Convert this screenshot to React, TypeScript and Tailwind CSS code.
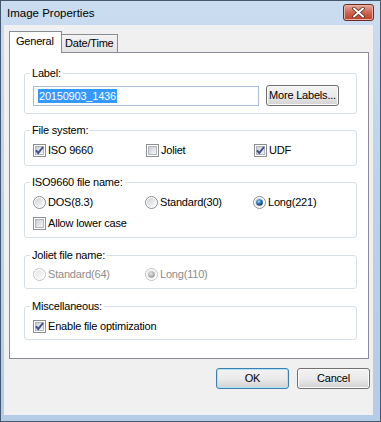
import type { ReactNode } from "react";

function CheckBox({ checked }: { checked?: boolean }) {
    return (
        <svg width="13" height="13" viewBox="0 0 13 13" className="shrink-0">
            <defs>
                <linearGradient id="cbFill" x1="0" y1="0" x2="1" y2="1">
                    <stop offset="0" stopColor="#c9ccd1" />
                    <stop offset="1" stopColor="#f7f7f7" />
                </linearGradient>
            </defs>
            <rect x="0.5" y="0.5" width="12" height="12" fill="#ffffff" stroke="#8e8f8f" />
            <rect x="2.5" y="2.5" width="8" height="8" fill="url(#cbFill)" stroke="#b2b6bc" />
            {checked && (
                <path d="M3 6.3 L5.3 9 L10 3" fill="none" stroke="#3b4f8f" strokeWidth="2" strokeLinejoin="round" />
            )}
        </svg>
    );
}

function Radio({ checked, disabled }: { checked?: boolean; disabled?: boolean }) {
    return (
        <svg width="13" height="13" viewBox="0 0 13 13" className="shrink-0">
            <defs>
                <linearGradient id="rbFill" x1="0" y1="0" x2="1" y2="1">
                    <stop offset="0" stopColor="#cfd2d6" />
                    <stop offset="1" stopColor="#fbfbfb" />
                </linearGradient>
                <linearGradient id="rbFillOff" x1="0" y1="0" x2="1" y2="1">
                    <stop offset="0" stopColor="#e4e5e7" />
                    <stop offset="1" stopColor="#fbfbfb" />
                </linearGradient>
                <radialGradient id="rbDot" cx="0.4" cy="0.35" r="0.65">
                    <stop offset="0" stopColor="#a8defc" />
                    <stop offset="0.45" stopColor="#2d86c9" />
                    <stop offset="1" stopColor="#0c355e" />
                </radialGradient>
                <radialGradient id="rbDotOff" cx="0.4" cy="0.35" r="0.65">
                    <stop offset="0" stopColor="#e6e6e6" />
                    <stop offset="1" stopColor="#9a9a9a" />
                </radialGradient>
            </defs>
            <circle cx="6.5" cy="6.5" r="6" fill="#ffffff" stroke={disabled ? "#c2c2c2" : "#8e8f8f"} />
            <circle cx="6.5" cy="6.5" r="4.5" fill={disabled ? "url(#rbFillOff)" : "url(#rbFill)"} />
            {checked && <circle cx="6.5" cy="6.5" r="3.3" fill={disabled ? "url(#rbDotOff)" : "url(#rbDot)"} />}
        </svg>
    );
}

function Group({ title, children, className }: { title: string; children: ReactNode; className?: string }) {
    return (
        <div className={`relative w-[333px] rounded-[3px] border border-[#d5dfe5] pl-[8px] ${className ?? ""}`}>
            <span className="absolute left-[5px] top-[-7px] bg-white px-[2px] leading-[13px]">{title}</span>
            {children}
        </div>
    );
}

function Option({ control, label, disabled, width }: { control: ReactNode; label: string; disabled?: boolean; width?: string }) {
    return (
        <div className={`flex h-[13px] items-center gap-[2px] ${width ?? ""}`}>
            {control}
            <span className={`leading-[13px] ${disabled ? "text-[#8d8d8d]" : "text-black"}`}>{label}</span>
        </div>
    );
}

function WinButton({ label, isDefault }: { label: string; isDefault?: boolean }) {
    return (
        <button
            className={`h-[21px] w-[73px] rounded-[3px] border bg-gradient-to-b from-[#f2f2f2] via-[#ebebeb] to-[#d2d2d2] leading-[19px] text-black ${
                isDefault ? "border-[#3c7fb1] shadow-[inset_0_0_0_1px_#aee3f8]" : "border-[#707070] shadow-[inset_0_0_0_1px_#fbfbfb]"
            }`}
        >
            {label}
        </button>
    );
}

export default function App() {
    return (
        <div className="flex h-[422px] w-[381px] flex-col border border-[#46586e] bg-gradient-to-b from-[#cadcf0] via-[#bad1ea] to-[#b4cce7] font-['Liberation_Sans',Arial,sans-serif] text-[11px] tracking-[-0.2px] text-black">
            {/* Title bar */}
            <div className="flex h-[24px] items-start justify-between pl-[6px] pr-[6px]">
                <span className="mt-[6px] text-[11.5px] leading-[13px] tracking-normal">Image Properties</span>
                <div className="mt-[3px] flex h-[17px] w-[31px] items-center justify-center rounded-[3px] border border-[#6b2a20] bg-gradient-to-b from-[#e7a99c] via-[#cf6650] to-[#b93d27] shadow-[inset_0_0_0_1px_#eab2a6]">
                    <svg width="13" height="11" viewBox="0 0 13 11">
                        <path d="M2 1.5 L11 9.5 M11 1.5 L2 9.5" stroke="#5a2a22" strokeWidth="3.6" strokeLinecap="round" />
                        <path d="M2 1.5 L11 9.5 M11 1.5 L2 9.5" stroke="#ffffff" strokeWidth="2" strokeLinecap="round" />
                    </svg>
                </div>
            </div>

            {/* Frame + client */}
            <div className="flex flex-1 pb-[6px] pl-[3px] pr-[7px]">
                <div className="flex flex-1 flex-col bg-[#f0f0f0] pl-[5px] pr-[3px] pt-[6px]">
                    {/* Tabs */}
                    <div className="flex h-[21px] items-end">
                        <div className="relative z-10 -mb-[1px] h-[22px] w-[53px] border border-b-0 border-[#898c95] bg-white pl-[6px] pt-[3px] leading-[13px]">
                            General
                        </div>
                        <div className="-ml-[1px] h-[18px] w-[57px] border border-b-0 border-[#898c95] bg-gradient-to-b from-[#f3f3f3] to-[#e3e3e3] pl-[3px] pt-[2px] leading-[13px]">
                            Date/Time
                        </div>
                    </div>

                    {/* Panel */}
                    <div className="mr-[1px] flex h-[307px] w-[360px] flex-col border border-[#898c95] bg-white pl-[14px] pt-[20px]">
                        <Group title="Label:" className="pb-[7px] pt-[11px]">
                            <div className="flex items-start gap-[7px]">
                                <div className="mt-[1px] flex h-[20px] w-[226px] items-center border border-[#a9bfd6] bg-white pl-[4px]">
                                    <span className="bg-[#3399ff] px-[1px] leading-[14px] text-white">20150903_1436</span>
                                </div>
                                <WinButton label="More Labels..." />
                            </div>
                        </Group>

                        <Group title="File system:" className="mt-[16px] pb-[8px] pt-[13px]">
                            <div className="flex">
                                <Option width="w-[113px]" control={<CheckBox checked />} label="ISO 9660" />
                                <Option width="w-[108px]" control={<CheckBox />} label="Joliet" />
                                <Option control={<CheckBox checked />} label="UDF" />
                            </div>
                        </Group>

                        <Group title="ISO9660 file name:" className="mt-[16px] pb-[7px] pt-[13px]">
                            <div className="flex">
                                <Option width="w-[112px]" control={<Radio />} label="DOS(8.3)" />
                                <Option width="w-[108px]" control={<Radio />} label="Standard(30)" />
                                <Option control={<Radio checked />} label="Long(221)" />
                            </div>
                            <div className="mt-[8px]">
                                <Option control={<CheckBox />} label="Allow lower case" />
                            </div>
                        </Group>

                        <Group title="Joliet file name:" className="mt-[17px] pb-[7px] pt-[12px]">
                            <div className="flex">
                                <Option width="w-[112px]" control={<Radio disabled />} label="Standard(64)" disabled />
                                <Option control={<Radio checked disabled />} label="Long(110)" disabled />
                            </div>
                        </Group>

                        <Group title="Miscellaneous:" className="mt-[17px] pb-[6px] pt-[13px]">
                            <Option control={<CheckBox checked />} label="Enable file optimization" />
                        </Group>
                    </div>

                    {/* Dialog buttons */}
                    <div className="mt-[9px] flex justify-end gap-[8px]">
                        <WinButton label="OK" isDefault />
                        <WinButton label="Cancel" />
                    </div>
                </div>
            </div>
        </div>
    );
}
